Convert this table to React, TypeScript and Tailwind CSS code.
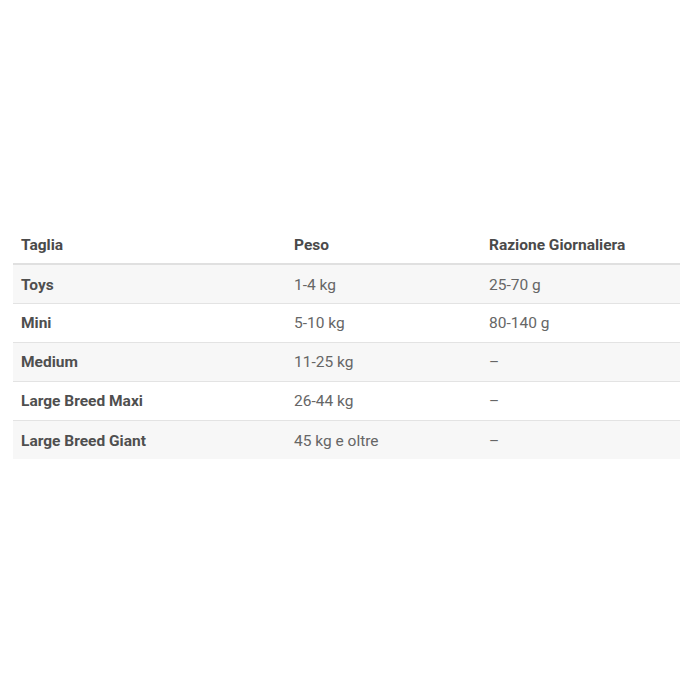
import React from "react";

const rows = [
  ["Toys", "1-4 kg", "25-70 g"],
  ["Mini", "5-10 kg", "80-140 g"],
  ["Medium", "11-25 kg", "–"],
  ["Large Breed Maxi", "26-44 kg", "–"],
  ["Large Breed Giant", "45 kg e oltre", "–"],
];

export default function App() {
  return (
    <div className="w-[681px] h-[681px] bg-white pt-[226px] pl-[13px] pr-[1px]" style={{ fontFamily: "Roboto, 'Liberation Sans', sans-serif" }}>
      <table className="w-full border-collapse text-[15.5px] text-[#555]">
        <thead>
          <tr className="border-b-2 border-[#e0e0e0]">
            <th className="text-left font-bold text-[#4a4a4a] pl-[8px] pt-[3px] h-[38px] w-[273px]">Taglia</th>
            <th className="text-left font-bold text-[#4a4a4a] pl-[8px] pt-[3px] h-[38px] w-[195px]">Peso</th>
            <th className="text-left font-bold text-[#4a4a4a] pl-[8px] pt-[3px] h-[38px]">Razione Giornaliera</th>
          </tr>
        </thead>
        <tbody>
          {rows.map((r, i) => (
            <tr key={i} className={`${i % 2 === 0 ? "bg-[#f7f7f7]" : "bg-white"} ${i < rows.length - 1 ? "border-b border-[#e3e3e3]" : ""}`}>
              <td className="pl-[8px] pt-[3px] h-[39px] font-bold text-[#4f4f4f]">{r[0]}</td>
              <td className="pl-[8px] pt-[3px] h-[39px] text-[#666]">{r[1]}</td>
              <td className="pl-[8px] pt-[3px] h-[39px] text-[#666]">{r[2]}</td>
            </tr>
          ))}
        </tbody>
      </table>
    </div>
  );
}
